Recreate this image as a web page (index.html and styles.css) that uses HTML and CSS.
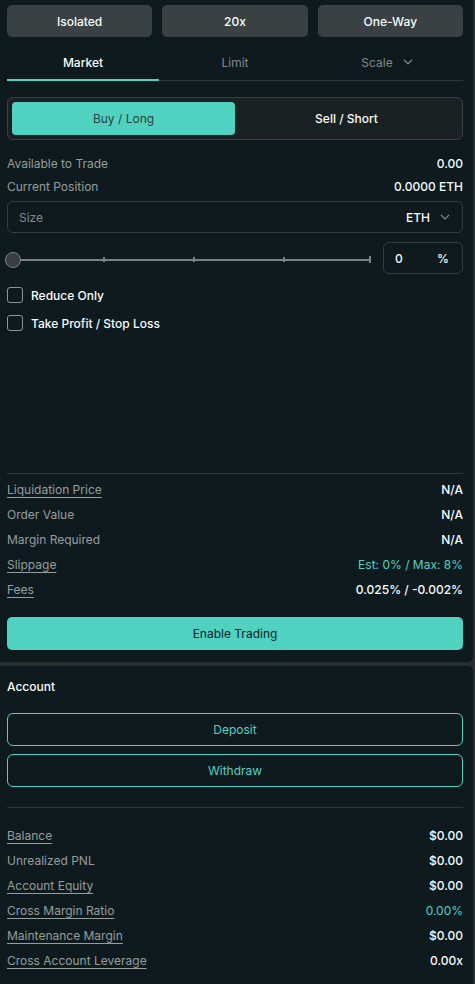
FILE: index.html
```html
<!DOCTYPE html>
<html>
<head>
<meta charset="utf-8">
<link rel="stylesheet" href="styles.css">
</head>
<body>
<div class="panel trade">
  <div class="top-btns">
    <button class="gray-btn">Isolated</button>
    <button class="gray-btn">20x</button>
    <button class="gray-btn">One-Way</button>
  </div>
  <div class="tabs">
    <div class="tab active">Market</div>
    <div class="tab">Limit</div>
    <div class="tab">Scale <svg class="chev" width="10" height="6" viewBox="0 0 10 6"><path d="M1 1l4 4 4-4" fill="none" stroke="currentColor" stroke-width="1.2"/></svg></div>
  </div>
  <div class="side-toggle">
    <div class="side buy">Buy / Long</div>
    <div class="side sell">Sell / Short</div>
  </div>
  <div class="info-rows top-info">
    <div class="row"><span class="lbl">Available to Trade</span><span class="val">0.00</span></div>
    <div class="row"><span class="lbl">Current Position</span><span class="val">0.0000 ETH</span></div>
  </div>
  <div class="size-input">
    <span class="placeholder">Size</span>
    <span class="unit">ETH <svg class="chev" width="10" height="6" viewBox="0 0 10 6"><path d="M1 1l4 4 4-4" fill="none" stroke="currentColor" stroke-width="1.2"/></svg></span>
  </div>
  <div class="slider-row">
    <div class="slider">
      <div class="track"></div>
      <div class="tick t1"></div>
      <div class="tick t2"></div>
      <div class="tick t3"></div>
      <div class="tick t4"></div>
      <div class="knob"></div>
    </div>
    <div class="pct-box"><span>0</span><span>%</span></div>
  </div>
  <div class="checks">
    <label class="check"><span class="box"></span>Reduce Only</label>
    <label class="check"><span class="box"></span>Take Profit / Stop Loss</label>
  </div>
  <div class="spacer"></div>
  <div class="divider"></div>
  <div class="info-rows summary">
    <div class="row"><span class="lbl ul">Liquidation Price</span><span class="val">N/A</span></div>
    <div class="row"><span class="lbl">Order Value</span><span class="val">N/A</span></div>
    <div class="row"><span class="lbl">Margin Required</span><span class="val">N/A</span></div>
    <div class="row"><span class="lbl ul">Slippage</span><span class="val teal">Est: 0% / Max: 8%</span></div>
    <div class="row"><span class="lbl ul">Fees</span><span class="val">0.025% / -0.002%</span></div>
  </div>
  <button class="enable-btn">Enable Trading</button>
</div>
<div class="panel account">
  <div class="acct-title">Account</div>
  <button class="outline-btn first">Deposit</button>
  <button class="outline-btn">Withdraw</button>
  <div class="divider acct-div"></div>
  <div class="info-rows acct-rows">
    <div class="row"><span class="lbl ul">Balance</span><span class="val">$0.00</span></div>
    <div class="row"><span class="lbl">Unrealized PNL</span><span class="val">$0.00</span></div>
    <div class="row"><span class="lbl ul">Account Equity</span><span class="val">$0.00</span></div>
    <div class="row"><span class="lbl ul">Cross Margin Ratio</span><span class="val teal">0.00%</span></div>
    <div class="row"><span class="lbl ul">Maintenance Margin</span><span class="val">$0.00</span></div>
    <div class="row"><span class="lbl ul">Cross Account Leverage</span><span class="val">0.00x</span></div>
  </div>
</div>
</body>
</html>
```
FILE: styles.css
```css
* { box-sizing: border-box; }
html, body {
  margin: 0;
  padding: 0;
  background: #2a2e30;
  font-family: Inter, "Noto Sans", sans-serif;
  font-size: 12px;
  color: #f6fefd;
}
button {
  font-family: inherit;
  border: none;
  cursor: pointer;
}
.panel {
  width: 473px;
  background: #0f1a1f;
  padding: 0 10px 0 7px;
  display: flex;
  flex-direction: column;
}
.trade {
  height: 662px;
  padding-top: 5px;
  padding-bottom: 12px;
  border-radius: 0 0 5px 0;
}
.account {
  margin-top: 4px;
  height: 318px;
  border-radius: 0 5px 0 0;
}
.top-btns {
  display: grid;
  grid-template-columns: repeat(3, 1fr);
  gap: 10px;
}
.gray-btn {
  height: 32px;
  background: #3a4142;
  color: #f6fefd;
  font-size: 12px;
  font-weight: 500;
  border-radius: 5px;
}
.tabs {
  margin-top: 7px;
  display: grid;
  grid-template-columns: repeat(3, 1fr);
  height: 37px;
  border-bottom: 1px solid #303739;
}
.tab {
  display: flex;
  align-items: center;
  justify-content: center;
  color: #7f8989;
  font-size: 12px;
  position: relative;
}
.tab.active {
  color: #f6fefd;
  font-weight: 500;
}
.tab.active::after {
  content: "";
  position: absolute;
  left: 0;
  right: 0;
  bottom: -1px;
  height: 2px;
  background: #50d2c1;
}
.chev {
  margin-left: 10px;
  color: #7f8989;
}
.side-toggle {
  margin-top: 16px;
  height: 43px;
  border: 1px solid #3a4044;
  border-radius: 6px;
  background: #1b2023;
  padding: 4px;
  display: grid;
  grid-template-columns: 1fr 1fr;
}
.side {
  display: flex;
  align-items: center;
  justify-content: center;
  font-size: 12px;
  border-radius: 4px;
}
.buy {
  background: #50d2c1;
  color: #284340;
}
.sell {
  color: #f6fefd;
  font-weight: 500;
}
.info-rows {
  display: flex;
  flex-direction: column;
}
.row {
  display: flex;
  justify-content: space-between;
  align-items: center;
  height: 25px;
}
.top-info {
  margin-top: 12px;
}
.top-info .row {
  height: 23px;
}
.lbl {
  color: #949e9c;
}
.lbl.ul {
  text-decoration: underline;
  text-decoration-color: #949e9c;
  text-underline-offset: 3px;
}
.val {
  font-weight: 500;
  color: #f6fefd;
}
.val.teal {
  color: #50d2c1;
  font-weight: 400;
}
.size-input {
  margin-top: 3px;
  height: 32px;
  border: 1px solid #363d41;
  border-radius: 6px;
  display: flex;
  align-items: center;
  justify-content: space-between;
  padding: 0 12px 0 11px;
}
.placeholder {
  color: #7f8989;
}
.unit {
  font-weight: 500;
  display: flex;
  align-items: center;
}
.slider-row {
  margin-top: 9px;
  display: flex;
  align-items: center;
  gap: 12px;
  margin-left: -3px;
}
.slider {
  position: relative;
  flex: 1;
  height: 32px;
}
.track {
  position: absolute;
  left: 14px;
  right: 0;
  top: 17px;
  height: 2px;
  background: #7b8282;
}
.tick {
  position: absolute;
  top: 15px;
  width: 2px;
  height: 5px;
  background: #7b8282;
}
.t1 { left: 99px; }
.t2 { left: 189px; }
.t3 { left: 279px; }
.t4 { right: 0; top: 14px; height: 7px; }
.knob {
  position: absolute;
  left: 1px;
  top: 10px;
  width: 16px;
  height: 16px;
  border-radius: 50%;
  background: #3a3e42;
  border: 1px solid #7b8282;
}
.pct-box {
  width: 80px;
  height: 32px;
  border: 1px solid #363d41;
  border-radius: 6px;
  display: flex;
  align-items: center;
  justify-content: space-between;
  padding: 0 13px 0 11px;
  font-weight: 500;
}
.checks {
  margin-top: 7px;
  display: flex;
  flex-direction: column;
}
.check {
  height: 28px;
  display: flex;
  align-items: center;
  font-weight: 500;
}
.box {
  width: 16px;
  height: 16px;
  border: 1px solid #8d9696;
  border-radius: 3px;
  margin-right: 8px;
}
.spacer {
  flex: 1;
}
.divider {
  height: 1px;
  background: #303739;
}
.summary {
  margin-top: 3px;
}
.enable-btn {
  margin-top: 15px;
  height: 33px;
  background: #50d2c1;
  color: #0f1a2a;
  border-radius: 5px;
  font-size: 12px;
}
.acct-title {
  margin-top: 10px;
  height: 20px;
  display: flex;
  align-items: center;
  font-size: 12px;
  font-weight: 500;
}
.outline-btn {
  height: 33px;
  background: transparent;
  border: 1px solid #50d2c1;
  color: #50d2c1;
  border-radius: 6px;
  font-size: 12px;
  margin-top: 8px;
}
.outline-btn.first {
  margin-top: 17px;
}
.acct-div {
  margin-top: 20px;
}
.acct-rows {
  margin-top: 15px;
}
```
